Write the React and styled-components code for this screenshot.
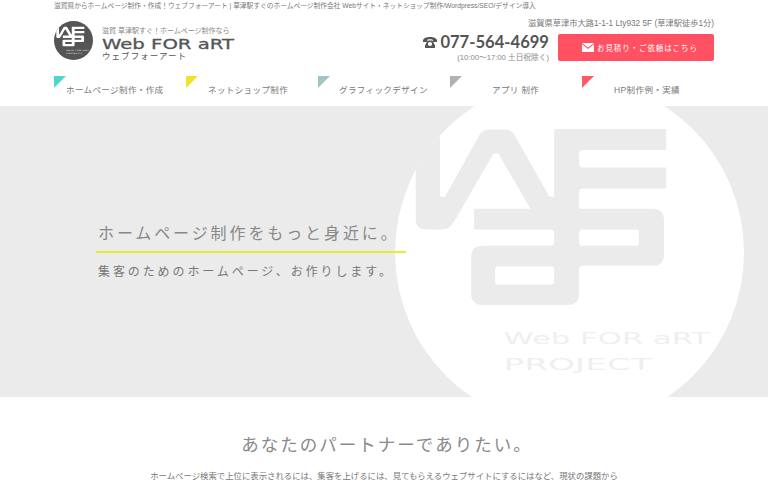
import styled, { createGlobalStyle } from "styled-components"

const JP = `"Liberation Sans", "Noto Sans CJK JP", sans-serif`

const navItems = [
    { label: "ホームページ制作・作成", color: "#4dd8cf", indent: 12 },
    { label: "ネットショップ制作", color: "#f3e02c", indent: 22 },
    { label: "グラフィックデザイン", color: "#9fc5c4", indent: 21 },
    { label: "アプリ 制作", color: "#b6afb1", indent: 42 },
    { label: "HP制作例・実績", color: "#ff5a68", indent: 32 },
]

const LOGO_PATH = `M107 190 A523 523 0 0 1 180 86 L180 270 L195 270 L295 90 Q305 68 325 68 L375 68 Q395 68 405 88
L508 270 L522 270 L522 67 L858 67 L858 130 L608 130 Q597 130 597 141 L597 171 Q597 182 608 182 L858 182 L858 245
L608 245 Q597 245 597 256 L597 306 L818 306 Q851 306 851 340 L851 443 Q851 477 818 477 L608 477 Q597 477 597 488
L597 560 Q597 594 563 594 L307 594 Q273 594 273 560 L273 450 Q273 417 307 417 L510 417 Q522 417 522 405 L522 380
Q522 368 510 368 L282 368 L282 306 L451 306 L355 141 L340 141 L222 345 Q208 368 185 368 L140 368 Q107 368 107 335 Z`

function LogoMark({ disc, ink, size, label }) {
    return (
        <svg width={size} height={size} viewBox="45 -86 1046 1046">
            <circle cx="568" cy="437" r="523" fill={disc} />
            <path d={LOGO_PATH} fill={ink} />
            <rect x="597" y="368" width="179" height="49" rx="10" fill={disc} />
            <rect x="345" y="478" width="177" height="55" rx="10" fill={disc} />
            <g fill={label} fontFamily="'DejaVu Sans', sans-serif" fontSize="50">
                <text x="370" y="712" textLength="618" lengthAdjust="spacingAndGlyphs">Web FOR aRT</text>
                <text x="370" y="788" textLength="445" lengthAdjust="spacingAndGlyphs">PROJECT</text>
            </g>
        </svg>
    )
}

export default function App() {
    return (
        <>
            <GlobalStyle />
            <TopLine>滋賀県からホームページ制作・作成！ウェブフォーアート | 草津駅すぐのホームページ制作会社 Webサイト・ネットショップ制作/Wordpress/SEO/デザイン導入</TopLine>
            <Header>
                <Brand>
                    <LogoMark disc="#555555" ink="#ffffff" label="#e8e8e8" size={39} />
                    <BrandText>
                        <Tagline>滋賀 草津駅すぐ！ホームページ制作なら</Tagline>
                        <svg width="136" height="15" viewBox="0 0 136 15">
                            <text x="0" y="13" textLength="132" lengthAdjust="spacingAndGlyphs" fontFamily="'DejaVu Sans', sans-serif" fontSize="14" stroke="#555555" strokeWidth="0.3" fill="#555555">Web FOR aRT</text>
                        </svg>
                        <BrandKana>ウェブフォーアート</BrandKana>
                    </BrandText>
                </Brand>
                <Contact>
                    <Address>滋賀県草津市大路1-1-1 Lty932 5F (草津駅徒歩1分)</Address>
                    <ContactRow>
                        <PhoneBlock>
                            <Phone>
                                <svg width="14" height="11" viewBox="0 0 14 11">
                                    <path d="M0 4.2C0 1 3 0 7 0s7 1 7 4.2V5H10V3.2C10 2.6 8.8 2.2 7 2.2S4 2.6 4 3.2V5H0Z" fill="#555555" />
                                    <path d="M4.6 3.6H9.4L12 8.6V11H2V8.6ZM7 4.9A2.1 2.1 0 1 0 7 9.1 2.1 2.1 0 1 0 7 4.9Z" fill="#555555" fillRule="evenodd" />
                                </svg>
                                077-564-4699
                            </Phone>
                            <Hours>(10:00〜17:00 土日祝除く)</Hours>
                        </PhoneBlock>
                        <QuoteButton>
                            <svg width="12" height="9" viewBox="0 0 12 9">
                                <path d="M0 0H12L6 4.6Z" fill="#fff" />
                                <path d="M0 1.2V9H12V1.2L6 5.9Z" fill="#fff" />
                            </svg>
                            お見積り・ご依頼はこちら
                        </QuoteButton>
                    </ContactRow>
                </Contact>
            </Header>
            <Nav>
                {navItems.map(item => (
                    <NavItem key={item.label} $indent={item.indent}>
                        <NavCorner $color={item.color} />
                        {item.label}
                    </NavItem>
                ))}
            </Nav>
            <Hero>
                <HeroMark>
                    <LogoMark disc="#ffffff" ink="#ebebeb" label="#efefef" size={349} />
                </HeroMark>
                <HeroTitle>ホームページ制作をもっと身近に。</HeroTitle>
                <HeroLead>集客のためのホームページ、お作りします。</HeroLead>
            </Hero>
            <Intro>
                <IntroTitle>あなたのパートナーでありたい。</IntroTitle>
                <IntroText>ホームページ検索で上位に表示されるには、集客を上げるには、見てもらえるウェブサイトにするにはなど、現状の課題から</IntroText>
            </Intro>
        </>
    )
}

const GlobalStyle = createGlobalStyle`
    html, body {
        margin: 0;
        padding: 0;
        background: #ffffff;
        overflow: hidden;
        font-family: ${JP};
        color: #555555;
    }
    #root {
        height: 480px;
        overflow: hidden;
    }
`
const TopLine = styled.h1`
    margin: 0;
    height: 18px;
    padding-left: 54px;
    font-size: 6.73px;
    line-height: 11px;
    font-weight: 400;
    color: #777777;
    white-space: nowrap;
`
const Header = styled.header`
    height: 58px;
    padding: 0 54px;
    display: flex;
    justify-content: space-between;
`
const Brand = styled.div`
    display: flex;
    align-items: flex-start;
    column-gap: 9px;
    padding-top: 3px;
`
const BrandText = styled.div`
    display: flex;
    flex-direction: column;
    padding-top: 5px;
    svg {
        display: block;
    }
`
const Tagline = styled.div`
    font-size: 7px;
    line-height: 10px;
    height: 10px;
    color: #888888;
    white-space: nowrap;
`
const BrandKana = styled.div`
    font-size: 8.5px;
    line-height: 11px;
    letter-spacing: 1.05px;
    color: #555555;
    white-space: nowrap;
`
const Contact = styled.div`
    display: flex;
    flex-direction: column;
    align-items: flex-end;
`
const Address = styled.div`
    font-size: 8.25px;
    line-height: 12px;
    color: #777777;
    white-space: nowrap;
`
const ContactRow = styled.div`
    display: flex;
    column-gap: 9px;
    margin-top: 4px;
`
const PhoneBlock = styled.div`
    display: flex;
    flex-direction: column;
    align-items: flex-end;
`
const Phone = styled.div`
    display: flex;
    align-items: center;
    font-family: Lato, sans-serif;
    font-size: 16.6px;
    line-height: 17px;
    font-weight: 700;
    color: #555555;
    column-gap: 3px;
`
const Hours = styled.div`
    font-size: 7.7px;
    line-height: 10px;
    margin-top: 2px;
    color: #888888;
    white-space: nowrap;
`
const QuoteButton = styled.div`
    width: 156px;
    height: 27px;
    box-sizing: border-box;
    padding-left: 24px;
    display: flex;
    align-items: center;
    column-gap: 3px;
    background-color: #ff5162;
    border-radius: 2px;
    color: #ffffff;
    font-size: 7.5px;
    letter-spacing: 0.9px;
    white-space: nowrap;
`
const Nav = styled.nav`
    height: 30px;
    padding: 0 54px;
    display: grid;
    grid-template-columns: repeat(5, 132px);
`
const NavItem = styled.div`
    position: relative;
    padding-left: ${props => props.$indent}px;
    padding-top: 9px;
    font-size: 8.5px;
    line-height: 11px;
    letter-spacing: 0.4px;
    color: #777777;
    white-space: nowrap;
`
const NavCorner = styled.span`
    position: absolute;
    left: 0;
    top: 0;
    width: 12px;
    height: 12px;
    background-color: ${props => props.$color};
    clip-path: polygon(0 0, 100% 0, 0 100%);
`
const Hero = styled.section`
    position: relative;
    height: 291px;
    box-sizing: border-box;
    padding: 117px 0 0 98px;
    background-color: #ebebeb;
    overflow: hidden;
`
const HeroMark = styled.div`
    position: absolute;
    left: 395px;
    top: -28px;
    width: 349px;
    height: 349px;
`
const HeroTitle = styled.h2`
    position: relative;
    margin: 0 0 0 -2px;
    width: 310px;
    box-sizing: border-box;
    padding: 0 0 6px 2px;
    border-bottom: 2px solid #e4ea3a;
    font-size: 16px;
    line-height: 22px;
    font-weight: 400;
    letter-spacing: 2.9px;
    color: #888888;
    white-space: nowrap;
`
const HeroLead = styled.p`
    position: relative;
    margin: 11px 0 0;
    font-size: 12px;
    line-height: 17px;
    letter-spacing: 2.9px;
    color: #777777;
    white-space: nowrap;
`
const Intro = styled.section`
    text-align: center;
`
const IntroTitle = styled.h2`
    margin: 35px 0 0;
    padding-left: 6px;
    font-size: 17.5px;
    line-height: 26px;
    font-weight: 400;
    letter-spacing: 2px;
    color: #8a8a8a;
`
const IntroText = styled.p`
    margin: 11px 0 0;
    font-size: 8.4px;
    line-height: 14px;
    color: #777777;
    white-space: nowrap;
`
